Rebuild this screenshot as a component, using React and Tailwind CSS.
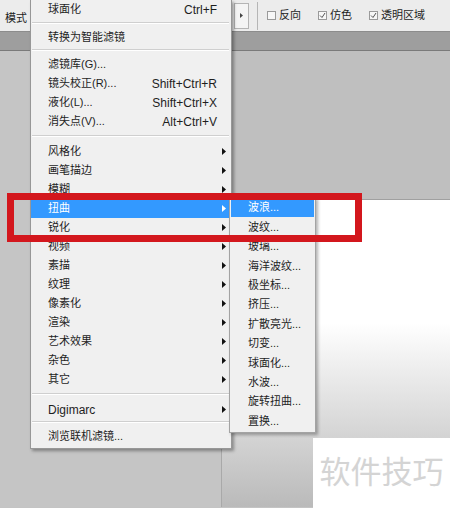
const font = "font-['Liberation_Sans','Noto_Sans_CJK_SC',sans-serif]";

function Arrow({ light }) {
  return (
    <svg width="4" height="7" viewBox="0 0 4 7" className="shrink-0">
      <polygon points="0,0 4,3.5 0,7" fill={light ? '#ffffff' : '#111111'} />
    </svg>
  );
}

function Check({ checked, label }) {
  return (
    <div className="flex items-center gap-[3px]">
      <div className="flex h-[9px] w-[9px] items-center justify-center border border-[#9a9a9a] bg-[#f7f7f7]">
        {checked && (
          <svg width="7" height="7" viewBox="0 0 7 7">
            <path d="M1 3.5 L3 5.5 L6 1" fill="none" stroke="#555" strokeWidth="1" />
          </svg>
        )}
      </div>
      <span className="text-[11px] text-[#1e1e1e]">{label}</span>
    </div>
  );
}

function Sep({ cls }) {
  return <div className={`ml-[1px] h-[2px] border-t border-[#cfcfcf] border-b border-b-white ${cls}`} />;
}

function Item({ label, shortcut, sub, active }) {
  return (
    <div
      className={`flex h-[19px] items-center justify-between pl-[17px] pr-[3px] ${
        active ? 'bg-[#3399ff] text-white' : 'text-[#1e1e1e]'
      }`}
    >
      <span className="text-[11px]">{label}</span>
      {shortcut && <span className="mr-[9px] text-[12px]">{shortcut}</span>}
      {sub && <Arrow light={active} />}
    </div>
  );
}

const subItems = ['波浪...', '波纹...', '玻璃...', '海洋波纹...', '极坐标...', '挤压...', '扩散亮光...', '切变...', '球面化...', '水波...', '旋转扭曲...', '置换...'];
const groups = ['风格化', '画笔描边', '模糊', '扭曲', '锐化', '视频', '素描', '纹理', '像素化', '渲染', '艺术效果', '杂色', '其它'];

export default function App() {
  return (
    <div className={`relative h-[508px] w-[450px] overflow-hidden bg-[#c4c4c4] ${font}`}>
      {/* options bar */}
      <div className="flex h-[32px] items-center border-b border-[#8c8c8c] bg-[#ececec]">
        <span className="pl-[5px] pt-[5px] text-[11px] text-[#1e1e1e]">模式</span>
        <div className="ml-[207px] flex h-[26px] w-[15px] items-center justify-center border border-[#b4b4b4] bg-[#f4f4f4]">
          <svg width="3" height="5" viewBox="0 0 3 5">
            <polygon points="0,0 3,2.5 0,5" fill="#444" />
          </svg>
        </div>
        <div className="ml-[8px] h-[28px] w-px bg-[#b5b5b5]" />
        <div className="ml-[9px] flex items-center gap-[17px]">
          <Check label="反向" />
          <Check checked label="仿色" />
          <Check checked label="透明区域" />
        </div>
      </div>
      <div className="h-[19px] border-b border-[#7a7a7a] bg-[#9e9e9e]" />

      {/* workspace */}
      <div className="flex h-[456px]">
        <div className="w-[222px] border-r border-[#a9a9a9] bg-[#c5c5c5]" />
        <div className="flex flex-1 flex-col">
          <div className="h-[148px] bg-[#bfbfbf]" />
          <div className="flex-1 border-t border-[#a0a0a0] bg-linear-to-b from-white from-40% to-[#bababa]" />
        </div>
      </div>

      {/* filter menu */}
      <div className="absolute left-[30px] top-0 w-[202px] border border-t-0 border-[#979797] bg-[#f0f0f0] pb-[2px] pr-[2px] shadow-[2px_2px_3px_rgba(0,0,0,0.35)]">
        <Item label="球面化" shortcut="Ctrl+F" />
        <Sep cls="mt-[3px] mb-[4px]" />
        <Item label="转换为智能滤镜" />
        <Sep cls="mt-[2px] mb-[4px]" />
        <Item label="滤镜库(G)..." />
        <Item label="镜头校正(R)..." shortcut="Shift+Ctrl+R" />
        <Item label="液化(L)..." shortcut="Shift+Ctrl+X" />
        <Item label="消失点(V)..." shortcut="Alt+Ctrl+V" />
        <Sep cls="mt-[4px] mb-[5px]" />
        {groups.map((g) => (
          <Item key={g} label={g} sub active={g === '扭曲'} />
        ))}
        <Sep cls="mt-[4px] mb-[5px]" />
        <div className="flex h-[19px] items-center justify-between pl-[17px] pr-[3px] text-[#1e1e1e]">
          <span className="text-[12px]">Digimarc</span>
          <Arrow />
        </div>
        <Sep cls="mt-[2px] mb-[4px]" />
        <Item label="浏览联机滤镜..." />
      </div>

      {/* distort submenu */}
      <div className="absolute left-[229px] top-[197px] w-[87px] border border-[#a3a3a3] bg-[#f0f0f0] px-[1px] pb-[1px] shadow-[2px_2px_3px_rgba(0,0,0,0.3)]">
        {subItems.map((s, i) => (
          <div
            key={s}
            className={`flex h-[19.4px] items-center pl-[17px] text-[11px] ${
              i === 0 ? 'bg-[#3399ff] text-white' : 'text-[#1e1e1e]'
            }`}
          >
            {s}
          </div>
        ))}
      </div>

      {/* highlight frame */}
      <div className="absolute left-[7px] top-[193px] h-[49px] w-[355px] border-[7px] border-[#d3171d]" />

      {/* watermark */}
      <div className="absolute left-[313px] top-[438px] flex h-[70px] w-[137px] items-center justify-center bg-white">
        <span className="text-[31px] text-[#d4d4d4]">软件技巧</span>
      </div>
    </div>
  );
}
